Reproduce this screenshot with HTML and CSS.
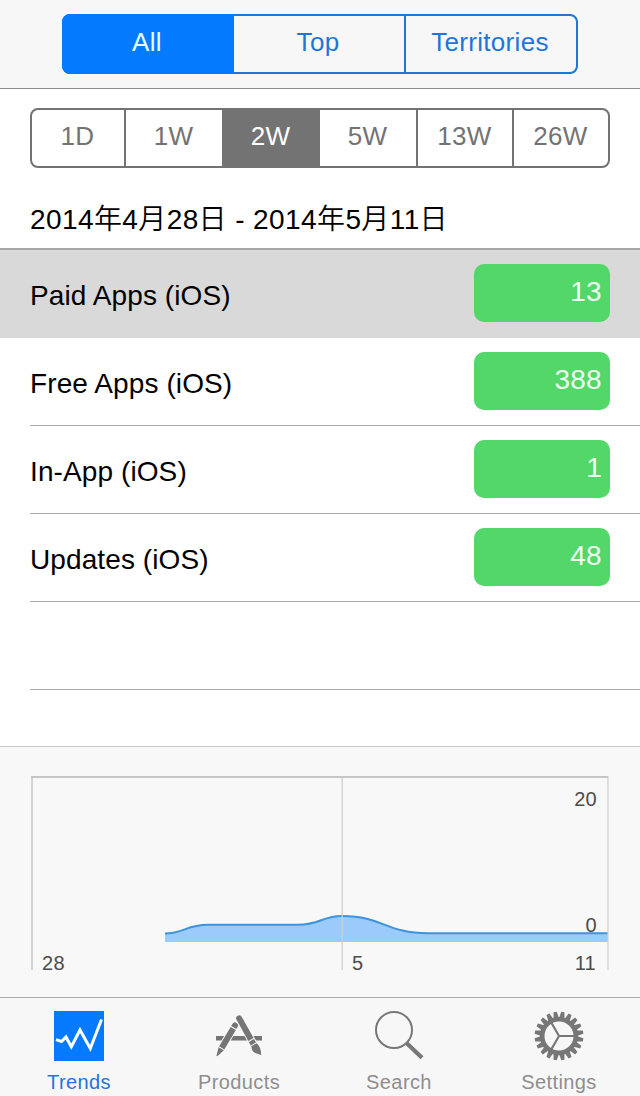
FILE: index.html
```html
<!DOCTYPE html>
<html lang="en">
<head>
  <meta charset="UTF-8">
  <meta name="viewport" content="width=device-width, initial-scale=1.0">
  <title>Trends</title>
  <link rel="stylesheet" href="styles.css">
</head>
<body>
  <header class="topbar">
    <div class="segments scope">
      <button class="segment active">All</button>
      <button class="segment">Top</button>
      <button class="segment">Territories</button>
    </div>
  </header>

  <main>
    <div class="segments range">
      <button class="segment">1D</button>
      <button class="segment">1W</button>
      <button class="segment active">2W</button>
      <button class="segment">5W</button>
      <button class="segment">13W</button>
      <button class="segment">26W</button>
    </div>
    <h2 class="dates">2014年4月28日 - 2014年5月11日</h2>
    <ul class="list">
      <li class="row selected"><span>Paid Apps (iOS)</span><span class="badge">13</span></li>
      <li class="row"><span>Free Apps (iOS)</span><span class="badge">388</span></li>
      <li class="row"><span>In-App (iOS)</span><span class="badge">1</span></li>
      <li class="row"><span>Updates (iOS)</span><span class="badge">48</span></li>
      <li class="row"></li>
    </ul>
  </main>

  <section class="chart">
    <svg width="640" height="250" viewBox="0 747 640 250">
      <path d="M165 933.5C184 933.5 186 924.8 208 924.8H298C320 924.8 322 916 342 916C383 916 386 933.3 428 933.3H608V942H165Z" fill="#9bcbfa"/>
      <path d="M165 933.5C184 933.5 186 924.8 208 924.8H298C320 924.8 322 916 342 916C383 916 386 933.3 428 933.3H608" fill="none" stroke="#3d93dc" stroke-width="2"/>
      <path d="M32 778V970" stroke="#d3d3d3" stroke-width="2"/>
      <path d="M342.2 778V970M608 778V970" stroke="#cdcfd1" stroke-width="1.3"/>
      <path d="M31 777H608.5" stroke="#c6c6c6" stroke-width="2"/>
      <text x="597" y="806" text-anchor="end">20</text>
      <text x="597" y="932" text-anchor="end">0</text>
      <text x="42" y="970">28</text>
      <text x="352" y="970">5</text>
      <text x="596" y="970" text-anchor="end">11</text>
    </svg>
  </section>

  <nav class="tabbar">
    <a class="tab current">
      <svg width="50" height="50" viewBox="0 0 50 50">
        <rect width="50" height="50" fill="#067aff"/>
        <path d="M2 28.6L7.5 30.5L12 26L17.3 35.8L26 19L36.3 37.5L47.5 8.5" fill="none" stroke="#fff" stroke-width="3"/>
      </svg>
      <span>Trends</span>
    </a>
    <a class="tab">
      <svg width="50" height="50" viewBox="0 0 50 50">
        <g fill="#757575">
          <path d="M2 25H48V29.4H2Z"/>
          <!-- pencil -->
          <g transform="translate(21 14.5) rotate(30.7)">
            <path class="halo" d="M-3 0A3 3 0 0 1 3 0V27L.4 35H-.4L-3 27Z"/>
            <path d="M-3 2.4V0A3 3 0 0 1 3 0V2.4Z"/>
            <path d="M-3 3.4H3V26H-3Z"/>
            <path d="M-3 27H3L.5 35.5H-.5Z"/>
          </g>
          <!-- brush -->
          <g transform="translate(25.2 7.4) rotate(-29)">
            <path class="halo" d="M-3 0A3 3 0 0 1 3 0V30C4.8 34 3.8 38 1.4 43C.4 40-3.8 38.5-4 34.5L-3 30Z"/>
            <path d="M-3 0A3 3 0 0 1 3 0V24.2H-3Z"/>
            <path d="M-3 25.2H3V29.2H-3Z"/>
            <path d="M-3 30.2H3C4.8 34 3.8 38 1.4 43C.4 40-3.8 38.5-4 34.5C-4 32.5-3 31.5-3 30.2Z"/>
          </g>
        </g>
      </svg>
      <span>Products</span>
    </a>
    <a class="tab">
      <svg width="50" height="50" viewBox="0 0 50 50">
        <circle cx="20" cy="19" r="18" fill="none" stroke="#777" stroke-width="2"/>
        <path d="M32.2 31.7L48 46.8" stroke="#777" stroke-width="4.2"/>
      </svg>
      <span>Search</span>
    </a>
    <a class="tab">
      <svg width="50" height="50" viewBox="-25 -25 50 50">
        <circle r="16.8" fill="none" stroke="#777" stroke-width="4.6"/>
        <path d="M0 0H17M0 0L-8.5-14.7M0 0L-8.5 14.7" stroke="#777" stroke-width="2.2"/>
        <g id="teeth" fill="#777"></g>
      </svg>
      <span>Settings</span>
    </a>
  </nav>

  <script>
    // 20 teeth around the gear
    const teeth = document.getElementById('teeth');
    for (let i = 0; i < 20; i++) {
      const tooth = document.createElementNS('http://www.w3.org/2000/svg', 'path');
      tooth.setAttribute('d', 'M17.5-2.8L24.4-1.6V1.6L17.5 2.8Z');
      tooth.setAttribute('transform', `rotate(${i * 18 + 9})`);
      teeth.appendChild(tooth);
    }
  </script>
</body>
</html>
```
FILE: styles.css
```css
* {
  box-sizing: border-box;
}

body {
  margin: 0;
  width: 640px;
  height: 1096px;
  overflow: hidden;
  display: flex;
  flex-direction: column;
  background-color: #fff;
  color: #000;
  font-family: "Liberation Sans", "Noto Sans CJK JP", sans-serif;
  font-size: 28px;
}

.topbar {
  height: 89px;
  padding: 14px 62px 0;
  background-color: #f7f7f7;
  border-bottom: 1px solid #8c8c8c;
}

main {
  height: 657px;
}

.segments {
  display: grid;
  height: 60px;
  border: 2px solid;
  border-radius: 8px;
}

.segment {
  padding: 0 2px 3px 0;
  border: 0;
  border-right: 2px solid;
  background: none;
  color: inherit;
  font-family: inherit;
  font-size: 26px;
  letter-spacing: 0.3px;
}

.segment:last-child {
  border-right: 0;
}

.scope {
  grid-template-columns: 170px 172px 170px;
  color: #1f75d8;
}

.scope .active {
  margin: -2px 0 -2px -2px;
  border: 0;
  border-radius: 8px 0 0 8px;
  background-color: #047aff;
  color: #e8fcff;
}

.range {
  grid-template-columns: 94px 98px 96px 98px 96px 94px;
  margin: 19px 30px 0;
  color: #737373;
}

.range .segment {
  padding-right: 1px;
}

.range .active {
  background-color: #737373;
  border-color: #737373;
  color: #fff;
}

.dates {
  height: 82px;
  margin: 0;
  padding: 32px 30px 0;
  border-bottom: 2px solid #a8a8a8;
  font-size: 28px;
  font-weight: 350;
  line-height: 40px;
  letter-spacing: 0.4px;
  white-space: nowrap;
}

.list {
  margin: 0;
  padding: 0;
  list-style: none;
}

.row {
  display: flex;
  justify-content: space-between;
  height: 88px;
  margin-left: 30px;
  padding: 14px 30px 0 0;
  border-bottom: 1px solid #ababab;
  line-height: 63px;
  letter-spacing: 0.1px;
}

.row.selected {
  margin-left: 0;
  padding-left: 30px;
  background-color: #d9d9d9;
  border-bottom-color: #d9d9d9;
}

.badge {
  width: 136px;
  height: 58px;
  padding-right: 8px;
  border-radius: 10px;
  background-color: #53d769;
  color: #effff0;
  line-height: 55px;
  letter-spacing: 0.3px;
  text-align: right;
}

.chart {
  height: 251px;
  border-top: 1px solid #c9c9c9;
  background-color: #f8f8f8;
}

.chart svg {
  display: block;
}

.chart text {
  fill: #4c4c4c;
  font-size: 20px;
  letter-spacing: 0.3px;
}

.tabbar {
  display: flex;
  height: 99px;
  border-top: 1px solid #a9a9a9;
  background-color: #f7f7f7;
}

.tab {
  flex: 1;
  display: flex;
  flex-direction: column;
  align-items: center;
  padding-top: 13px;
  color: #8e8e8e;
  font-size: 20px;
  line-height: 24px;
  letter-spacing: 0.4px;
}

.tab svg {
  margin-bottom: 9px;
  margin-right: 2px;
}

.tab span {
  margin-right: 2px;
}

.tab.current {
  color: #1f75d8;
}

/* light outline keeps the crossed tools apart */
.halo {
  fill: #f7f7f7;
  stroke: #f7f7f7;
  stroke-width: 2px;
}
```
